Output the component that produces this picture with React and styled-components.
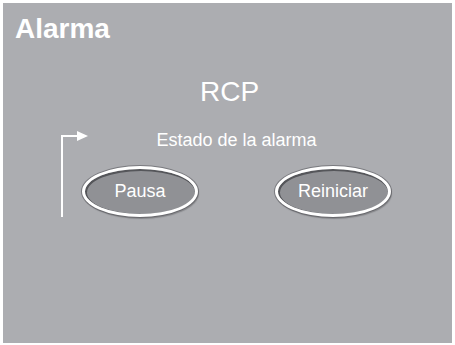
import React from 'react';
import styled, { createGlobalStyle } from 'styled-components';

const GlobalStyle = createGlobalStyle`
  html, body {
    margin: 0;
    padding: 0;
    background: #ffffff;
  }
  body {
    font-family: "Liberation Sans", Arial, sans-serif;
  }
`

const Screen = styled.div`
  width: 455px;
  height: 345px;
  padding: 3px 3px 2px 3px;
  box-sizing: border-box;
  background: #ffffff;
`

const Panel = styled.div`
  height: 100%;
  background-color: #acadb1;
  color: #ffffff;
  display: flex;
  flex-direction: column;
`

const Title = styled.h1`
  margin: 10px 0 0 12px;
  font-size: 28px;
  font-weight: bold;
  line-height: 31px;
`

const Subtitle = styled.div`
  margin-top: 32px;
  padding-left: 4px;
  text-align: center;
  font-size: 28px;
  line-height: 32px;
`

const Body = styled.div`
  margin: 22px 0 0 56px;
  display: grid;
  grid-template-columns: 23px 309px;
  grid-template-rows: 21px auto;
  row-gap: 15px;
`

const Connector = styled.svg`
  grid-column: 1 / 3;
  grid-row: 1 / 3;
  justify-self: start;
  overflow: visible;
`

const Heading = styled.div`
  grid-column: 2;
  grid-row: 1;
  text-align: center;
  font-size: 18px;
  line-height: 21px;
`

const Buttons = styled.div`
  grid-column: 2;
  grid-row: 2;
  display: flex;
  justify-content: space-between;
`

const OvalButton = styled.button`
  width: 116px;
  height: 51px;
  box-sizing: border-box;
  border-radius: 50%;
  border: 3px solid #ffffff;
  background: #909195;
  box-shadow: inset 1px 1px 0 1px #55565a, 0 0 0 1px rgba(80, 80, 85, 0.55), 1px 2px 1px rgba(60, 60, 64, 0.35);
  color: #ffffff;
  font-family: "Liberation Sans", Arial, sans-serif;
  font-size: 18px;
  padding: 0;
  cursor: pointer;
`

export default function App() {
  return (
    <>
      <GlobalStyle />
      <Screen>
        <Panel>
          <Title>Alarma</Title>
          <Subtitle>RCP</Subtitle>
          <Body>
            <Connector width="30" height="87" viewBox="0 0 30 87">
              <path d="M3 87 V6 H19" fill="none" stroke="#ffffff" strokeWidth="2" />
              <polygon points="18,1 29,6 18,11" fill="#ffffff" />
            </Connector>
            <Heading>Estado de la alarma</Heading>
            <Buttons>
              <OvalButton>Pausa</OvalButton>
              <OvalButton>Reiniciar</OvalButton>
            </Buttons>
          </Body>
        </Panel>
      </Screen>
    </>
  );
}
